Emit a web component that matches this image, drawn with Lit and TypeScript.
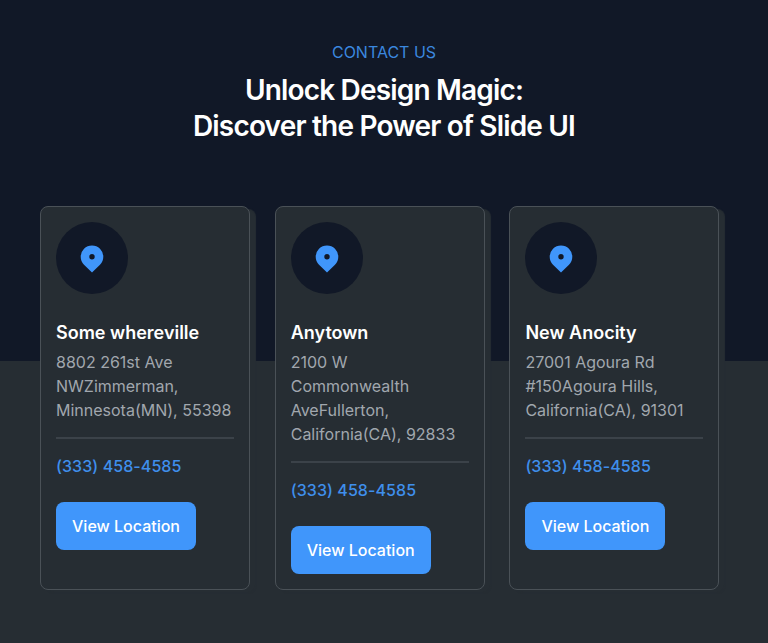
import { LitElement, html, css } from "lit";
import { customElement, property } from "lit/decorators.js";

interface Place {
  name: string;
  lines: string[];
  phone: string;
}

const places: Place[] = [
  { name: "Some whereville", lines: ["8802 261st Ave", "NWZimmerman,", "Minnesota(MN), 55398"], phone: "(333) 458-4585" },
  { name: "Anytown", lines: ["2100 W", "Commonwealth", "AveFullerton,", "California(CA), 92833"], phone: "(333) 458-4585" },
  { name: "New Anocity", lines: ["27001 Agoura Rd", "#150Agoura Hills,", "California(CA), 91301"], phone: "(333) 458-4585" },
];

@customElement("location-card")
export class LocationCard extends LitElement {
  @property({ attribute: false }) place!: Place;

  static styles = css`
    :host {
      display: block;
      box-sizing: border-box;
      padding: 15px;
      border: 1px solid #4a5157;
      border-radius: 8px;
      background: #262d33;
      box-shadow: 6px 3px 1px #262d33;
      font-size: 16px;
      line-height: 24px;
    }
    .badge {
      display: flex;
      align-items: center;
      justify-content: center;
      width: 72px;
      height: 72px;
      border-radius: 50%;
      background: #111827;
    }
    .pin {
      display: block;
      width: 24px;
      height: 28px;
      margin-top: 2px;
    }
    .name {
      margin: 25px 0 3px;
      font-size: 18px;
      line-height: 28px;
      font-weight: 600;
      color: #fff;
    }
    .address {
      margin: 0;
      color: #a1a7ae;
      white-space: nowrap;
    }
    .line {
      display: block;
    }
    .rule {
      height: 2px;
      margin: 15px 0 15px;
      border: 0;
      background: #3b4249;
    }
    .phone {
      display: block;
      font-weight: 500;
      letter-spacing: 0.08px;
      color: #3f8fec;
      text-decoration: none;
    }
    .view {
      display: block;
      width: 140px;
      height: 48px;
      margin-top: 24px;
      padding: 0;
      border: 0;
      border-radius: 8px;
      background: #4096fb;
      color: #fff;
      font: 500 16px/24px Inter, sans-serif;
      white-space: nowrap;
    }
  `;

  render() {
    const { name, lines, phone } = this.place;
    return html`
      <div class="badge">
        <svg class="pin" viewBox="0 0 24 28" fill="#4096fb">
          <path fill-rule="evenodd" d="M12 27.6 4 19.7a11.3 11.3 0 1 1 16 0ZM12 9a2.7 2.7 0 1 0 0 5.4 2.7 2.7 0 0 0 0-5.4Z" />
        </svg>
      </div>
      <h3 class="name">${name}</h3>
      <p class="address">${lines.map((line) => html`<span class="line">${line}</span>`)}</p>
      <hr class="rule" />
      <a class="phone">${phone}</a>
      <button class="view">View Location</button>
    `;
  }
}

@customElement("app-root")
export class AppRoot extends LitElement {
  static styles = css`
    :host {
      display: block;
      box-sizing: border-box;
      height: 643px;
      padding: 40px 48.6px 0 40px;
      background: linear-gradient(#111827 361px, #262d33 361px);
      font-family: Inter, sans-serif;
      overflow: hidden;
    }
    .intro {
      margin-right: -8.6px;
      height: 166px;
      text-align: center;
    }
    .eyebrow {
      margin: 0 0 8px;
      font-size: 16px;
      line-height: 24px;
      color: #3b87df;
    }
    .title {
      margin: 0;
      font-size: 28px;
      line-height: 36px;
      font-weight: 600;
      letter-spacing: -0.82px;
      color: #fff;
    }
    .cards {
      display: grid;
      grid-template-columns: repeat(3, 1fr);
      gap: 24.7px;
    }
    .card {
      height: 384px;
    }
  `;

  render() {
    return html`
      <header class="intro">
        <p class="eyebrow">CONTACT US</p>
        <h2 class="title">Unlock Design Magic:<br />Discover the Power of Slide UI</h2>
      </header>
      <section class="cards">
        ${places.map((place) => html`<location-card class="card" .place=${place}></location-card>`)}
      </section>
    `;
  }
}
